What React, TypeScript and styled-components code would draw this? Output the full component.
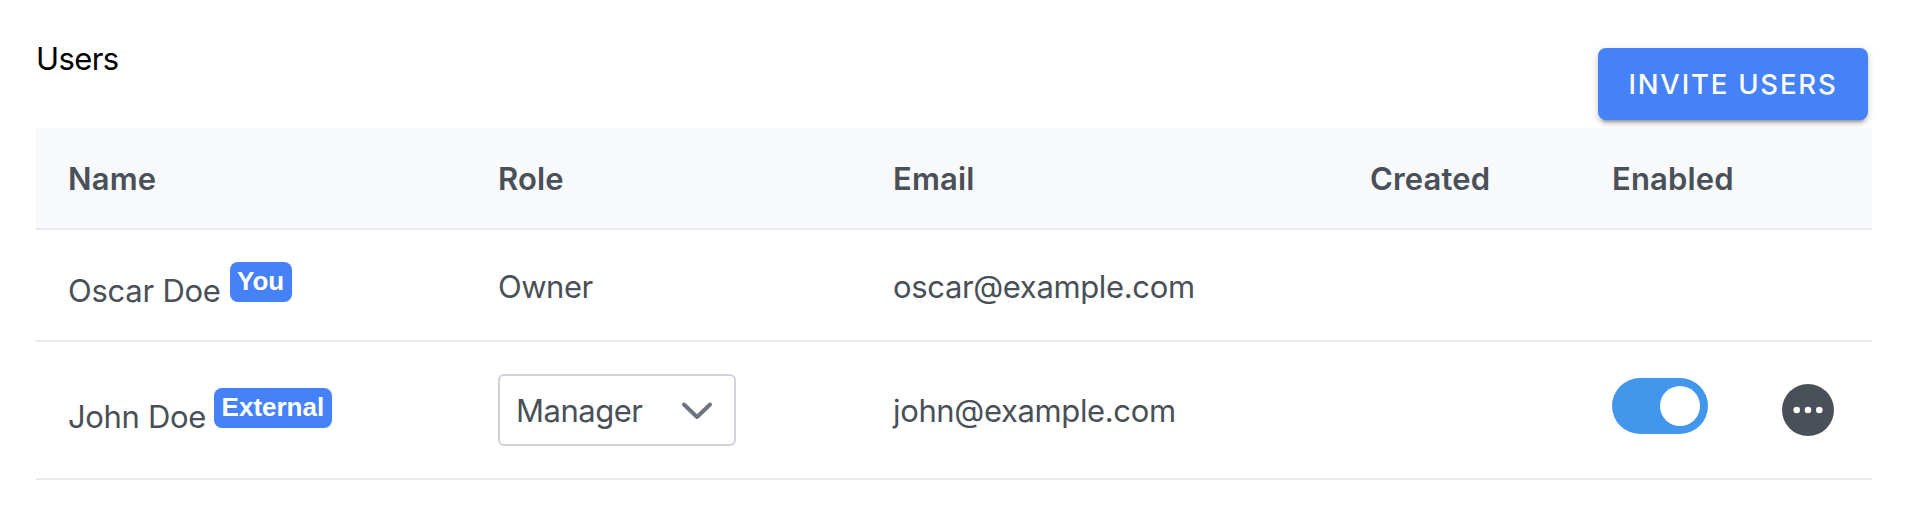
import React from "react";
import styled, { createGlobalStyle } from "styled-components";

const GlobalStyle = createGlobalStyle`
  * { box-sizing: border-box; }
  body { margin: 0; background: #fff; font-family: Inter, "Liberation Sans", sans-serif; color: #495057; }
`;

const Page = styled.main`
  height: 512px;
  padding: 0 40px 0 36px;
`;

const TopBar = styled.header`
  display: flex;
  justify-content: space-between;
  align-items: flex-start;
  height: 128px;
  padding: 40px 4px 0 0;
`;

const Title = styled.h1`
  margin: 0;
  font-size: 31px;
  line-height: 38px;
  font-weight: 400;
  letter-spacing: -0.6px;
  color: #000;
`;

const InviteButton = styled.button`
  width: 270px;
  height: 72px;
  margin-top: 8px;
  padding: 0;
  border: 0;
  border-radius: 8px;
  background: #4582f7;
  color: #fff;
  font: 500 27.5px/72px Inter, sans-serif;
  letter-spacing: 1.8px;
  box-shadow: 0 6px 2px -4px rgba(0, 0, 0, 0.2), 0 4px 4px rgba(0, 0, 0, 0.14), 0 2px 10px rgba(0, 0, 0, 0.12);
`;

const Row = styled.div<{ $height: number; $head?: boolean }>`
  display: grid;
  grid-template-columns: 430px 395px 477px 242px 292px;
  align-items: center;
  height: ${(p) => p.$height}px;
  padding: 0 0 0 32px;
  overflow: hidden;
  border-bottom: 2px solid #e9eaee;
  background: ${(p) => (p.$head ? "#f8f9fb" : "#fff")};
`;

const Cell = styled.div<{ $head?: boolean; $gap?: number; $spacing?: number; $shift?: number }>`
  display: flex;
  align-items: center;
  gap: ${(p) => p.$gap ?? 0}px;
  padding-top: ${(p) => p.$shift ?? 0}px;
  font-size: 31px;
  line-height: 38px;
  font-weight: ${(p) => (p.$head ? 600 : 400)};
  letter-spacing: ${(p) => p.$spacing ?? (p.$head ? 0.15 : -0.5)}px;
  white-space: nowrap;
`;

const Badge = styled.span<{ $width: number }>`
  width: ${(p) => p.$width}px;
  height: 40px;
  margin-bottom: 18px;
  border-radius: 8px;
  background: #4582f7;
  color: #fff;
  font: 700 26px/38px "Liberation Sans", Arial, sans-serif;
  letter-spacing: 0;
  text-align: center;
`;

const Select = styled.div`
  display: flex;
  align-items: center;
  justify-content: space-between;
  width: 238px;
  height: 72px;
  padding: 1px 21px 0 16px;
  border: 2px solid #ced4da;
  border-radius: 6px;
`;

const Toggle = styled.span`
  display: flex;
  justify-content: flex-end;
  align-items: center;
  width: 96px;
  height: 56px;
  margin-bottom: 8px;
  padding: 8px;
  border-radius: 28px;
  background: #4296ec;
`;

const Knob = styled.span`
  width: 40px;
  height: 40px;
  border-radius: 50%;
  background: #fff;
`;

const MoreIcon = styled.svg`
  margin-left: 74px;
`;

export default function App() {
  return (
    <>
      <GlobalStyle />
      <Page>
        <TopBar>
          <Title>Users</Title>
          <InviteButton>INVITE USERS</InviteButton>
        </TopBar>
        <Row $height={102} $head>
          <Cell $head $shift={2}>Name</Cell>
          <Cell $head $shift={2}>Role</Cell>
          <Cell $head $shift={2}>Email</Cell>
          <Cell $head $shift={2}>Created</Cell>
          <Cell $head $shift={2}>Enabled</Cell>
        </Row>
        <Row $height={112}>
          <Cell $gap={9} $shift={12} $spacing={-0.25}>
            Oscar Doe <Badge $width={62}>You</Badge>
          </Cell>
          <Cell $shift={4}>Owner</Cell>
          <Cell $shift={4} $spacing={-0.36}>oscar@example.com</Cell>
        </Row>
        <Row $height={138}>
          <Cell $gap={8} $shift={14} $spacing={-0.35}>
            John Doe <Badge $width={118}>External</Badge>
          </Cell>
          <Cell>
            <Select>
              Manager
              <svg width="32" height="20" viewBox="0 0 32 20" fill="none">
                <path d="M3 3.5 16 16 29 3.5" stroke="#6c757d" strokeWidth="4" strokeLinecap="round" strokeLinejoin="round" />
              </svg>
            </Select>
          </Cell>
          <Cell $shift={2} $spacing={-0.36}>john@example.com</Cell>
          <Cell />
          <Cell>
            <Toggle>
              <Knob />
            </Toggle>
            <MoreIcon width="52" height="52" viewBox="0 0 52 52">
              <circle cx="26" cy="26" r="26" fill="#495057" />
              <circle cx="14.7" cy="26" r="3.3" fill="#fff" />
              <circle cx="26" cy="26" r="3.3" fill="#fff" />
              <circle cx="37.3" cy="26" r="3.3" fill="#fff" />
            </MoreIcon>
          </Cell>
        </Row>
      </Page>
    </>
  );
}
